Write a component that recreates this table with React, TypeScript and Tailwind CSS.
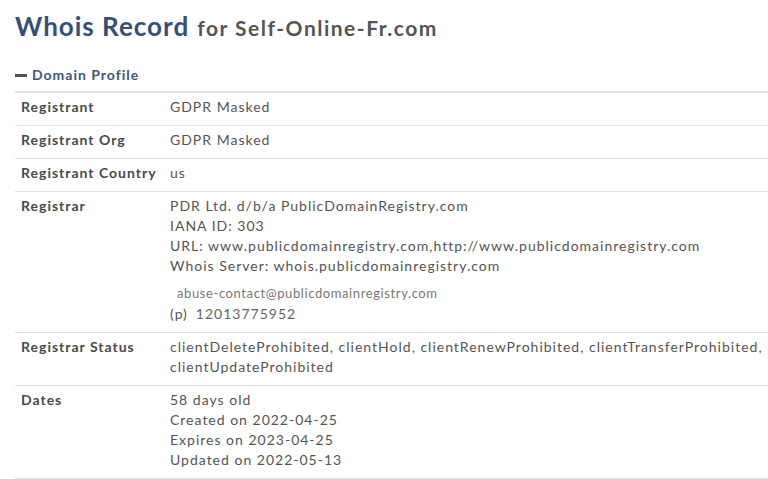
const rows: { label: string; lines: React.ReactNode[] }[] = [
  { label: 'Registrant', lines: ['GDPR Masked'] },
  { label: 'Registrant Org', lines: ['GDPR Masked'] },
  { label: 'Registrant Country', lines: ['us'] },
];

const Row = ({ label, children }: { label: string; children: React.ReactNode }) => (
  <div className="flex border-b border-[#e2e2e2]">
    <div className="w-[155px] shrink-0 pl-[6px] pt-[4px] pb-[8px] font-bold text-[#4a4a4a]">{label}</div>
    <div className="flex-1 pt-[4px] pb-[8px] text-[#555]">{children}</div>
  </div>
);

export default function App() {
  return (
    <div className="min-h-screen bg-white pl-[15px] font-['Lato',sans-serif] text-[14px] leading-[20px] tracking-[1px]">
      <h1 className="pt-[8px] flex items-baseline gap-[8px] leading-[36px]">
        <span className="text-[26px] font-bold text-[#34507a]">Whois Record</span>
        <span className="text-[21px] font-bold tracking-[1.5px] text-[#555]">for Self-Online-Fr.com</span>
      </h1>

      <div className="mt-[19px] flex items-center gap-[5px] pb-[6px] font-bold text-[#3d5680]">
        <span className="block w-[12px] h-[3px] bg-[#555]" />
        Domain Profile
      </div>

      <div className="border-t-2 border-[#e2e2e2]">
        {rows.map((r) => (
          <Row key={r.label} label={r.label}>
            {r.lines}
          </Row>
        ))}
        <Row label="Registrar">
          <div>PDR Ltd. d/b/a PublicDomainRegistry.com</div>
          <div>IANA ID: 303</div>
          <div>URL: www.publicdomainregistry.com,http://www.publicdomainregistry.com</div>
          <div>Whois Server: whois.publicdomainregistry.com</div>
          <div className="mt-[7px] pl-[7px] text-[13px] tracking-[0.6px] text-[#777]">abuse-contact@publicdomainregistry.com</div>
          <div className="mt-[1px] flex gap-[8px]">
            <span>(p)</span>
            <span className="text-[#666]">12013775952</span>
          </div>
        </Row>
        <Row label="Registrar Status">
          <div>
            clientDeleteProhibited, clientHold, clientRenewProhibited, clientTransferProhibited,
            clientUpdateProhibited
          </div>
        </Row>
        <Row label="Dates">
          <div>58 days old</div>
          <div>Created on 2022-04-25</div>
          <div>Expires on 2023-04-25</div>
          <div>Updated on 2022-05-13</div>
        </Row>
      </div>
    </div>
  );
}
